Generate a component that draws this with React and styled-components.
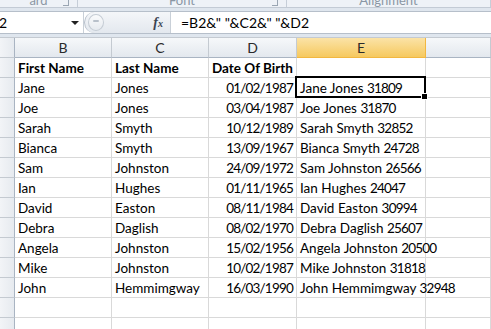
import React from 'react';
import styled, { createGlobalStyle } from 'styled-components';

const GlobalStyle = createGlobalStyle`
    html, body {
        margin: 0;
        padding: 0;
        background: #fff;
        overflow: hidden;
    }
    body {
        font-family: Lato, "Open Sans", sans-serif;
    }
`;

const Page = styled.div`
    width: 491px;
    height: 329px;
    overflow: hidden;
    background: #dfe6ee;
`;

const Ribbon = styled.div`
    display: flex;
    height: 7px;
    background: #eef2f7;
    border-bottom: 1px solid #c3cbd5;
    overflow: hidden;
`;

const RibbonGroup = styled.div`
    position: relative;
    width: ${p => p.$width ? p.$width + 'px' : 'auto'};
    flex: ${p => p.$width ? 'none' : '1'};
    border-right: 1px solid #c6ced8;
    display: flex;
    justify-content: center;
    align-items: flex-end;
    font-size: 13px;
    line-height: 7px;
    color: #8a96a4;
`;

const RibbonLabel = styled.span`
    margin-bottom: 3px;
`;

const Launcher = styled.span`
    position: absolute;
    right: 8px;
    bottom: 1px;
    width: 5px;
    height: 5px;
    border-right: 1px solid #9aa6b3;
    border-bottom: 1px solid #9aa6b3;
`;

const FormulaBar = styled.div`
    display: flex;
    height: 21px;
    margin-top: 3px;
    border-top: 1px solid #b6bfca;
    border-bottom: 1px solid #b6bfca;
    background: #fff;
`;

const NameBox = styled.div`
    width: 84px;
    display: flex;
    align-items: center;
    justify-content: space-between;
    padding-right: 4px;
    box-sizing: border-box;
    font-size: 14px;
    color: #000;
    border-right: 1px solid #c9d0d8;
`;

const NameText = styled.span`
    margin-left: -1px;
`;

const DropArrow = styled.span`
    width: 0;
    height: 0;
    border-left: 4px solid transparent;
    border-right: 4px solid transparent;
    border-top: 4px solid #222;
`;

const Pill = styled.div`
    width: 86px;
    display: flex;
    align-items: center;
    justify-content: space-between;
    padding: 0 7px 0 3px;
    box-sizing: border-box;
    background: linear-gradient(#f4f6f9, #e3e8ee);
    border-left: 1px solid #b6bfca;
    border-radius: 11px 0 0 11px;
`;

const GripButton = styled.span`
    width: 14px;
    height: 15px;
    border-radius: 50%;
    border: 1px solid #c5ccd4;
    background: linear-gradient(#fafbfc, #e6eaef);
    display: flex;
    align-items: center;
    justify-content: center;
    &::after {
        content: '';
        width: 6px;
        height: 2px;
        border-radius: 1px;
        background: #b8c0ca;
        margin-top: -3px;
    }
`;

const Fx = styled.span`
    font-family: "Liberation Serif", serif;
    font-style: italic;
    font-weight: bold;
    font-size: 14px;
    color: #3a4452;
    & small {
        font-size: 10px;
    }
`;

const FormulaInput = styled.div`
    flex: 1;
    display: flex;
    align-items: center;
    padding-left: 10px;
    font-size: 14px;
    color: #000;
    border-left: 1px solid #c9d0d8;
    white-space: pre;
`;

const Sheet = styled.div`
    display: grid;
    grid-template-columns: 15px 97px 97px 88px 129px 1fr;
    grid-auto-rows: 20px;
    margin-top: 3px;
    background: #fff;
    border-top: 1px solid #c4cad1;
`;

const ColHead = styled.div`
    display: flex;
    align-items: center;
    justify-content: center;
    font-size: 14px;
    color: #2a2a2a;
    background: ${p => p.$active
        ? 'linear-gradient(#fbe3a7, #f6c95f)'
        : 'linear-gradient(#f6f8fa, #e3e8ee)'};
    border-right: 1px solid ${p => p.$active ? '#f2b740' : '#c4cad1'};
    border-bottom: 1px solid ${p => p.$active ? '#f2b740' : '#a9b4c2'};
    box-sizing: border-box;
`;

const RowHead = styled.div`
    background: linear-gradient(90deg, #f2f4f7, #e6eaef);
    border-right: 1px solid #a9b4c2;
    border-bottom: 1px solid #c4cad1;
    box-sizing: border-box;
`;

const Cell = styled.div`
    position: relative;
    display: flex;
    align-items: center;
    justify-content: ${p => p.$right ? 'flex-end' : 'flex-start'};
    padding: 0 3px;
    box-sizing: border-box;
    font-size: 13.5px;
    font-weight: ${p => p.$bold ? 'bold' : 'normal'};
    letter-spacing: ${p => p.$right ? '-0.8px' : '0'};
    color: #000;
    white-space: pre;
    border-right: 1px solid #d9d9d9;
    border-bottom: 1px solid #d9d9d9;
    z-index: ${p => p.$selected ? 2 : 'auto'};
`;

const Serial = styled.span`
    letter-spacing: -0.8px;
`;

const Selection = styled.span`
    position: absolute;
    left: -2px;
    top: -2px;
    right: -1px;
    bottom: -1px;
    border: 2px solid #000;
    pointer-events: none;
    &::after {
        content: '';
        position: absolute;
        right: -4px;
        bottom: -4px;
        width: 5px;
        height: 5px;
        background: #000;
        border: 1px solid #fff;
    }
`;

const people = [
    ['Jane', 'Jones', '01/02/1987', 31809],
    ['Joe', 'Jones', '03/04/1987', 31870],
    ['Sarah', 'Smyth', '10/12/1989', 32852],
    ['Bianca', 'Smyth', '13/09/1967', 24728],
    ['Sam', 'Johnston', '24/09/1972', 26566],
    ['Ian', 'Hughes', '01/11/1965', 24047],
    ['David', 'Easton', '08/11/1984', 30994],
    ['Debra', 'Daglish', '08/02/1970', 25607],
    ['Angela', 'Johnston', '15/02/1956', 20500],
    ['Mike', 'Johnston', '10/02/1987', 31818],
    ['John', 'Hemmimgway', '16/03/1990', 32948],
];

const columns = ['B', 'C', 'D', 'E', ''];

function App() {
    return (
        <Page>
            <GlobalStyle />
            <Ribbon>
                <RibbonGroup $width={77}><RibbonLabel>ard</RibbonLabel><Launcher /></RibbonGroup>
                <RibbonGroup $width={208}><RibbonLabel>Font</RibbonLabel><Launcher /></RibbonGroup>
                <RibbonGroup><RibbonLabel>Alignment</RibbonLabel></RibbonGroup>
            </Ribbon>
            <FormulaBar>
                <NameBox>
                    <NameText>2</NameText>
                    <DropArrow />
                </NameBox>
                <Pill>
                    <GripButton />
                    <Fx>f<small>x</small></Fx>
                </Pill>
                <FormulaInput>{'=B2&" "&C2&" "&D2'}</FormulaInput>
            </FormulaBar>
            <Sheet>
                <RowHead />
                {columns.map((c, i) => (
                    <ColHead key={i} $active={c === 'E'}>{c}</ColHead>
                ))}

                <RowHead />
                <Cell $bold>First Name</Cell>
                <Cell $bold>Last Name</Cell>
                <Cell $bold>Date Of Birth</Cell>
                <Cell />
                <Cell />

                {people.map(([first, last, dob, serial], i) => (
                    <React.Fragment key={first}>
                        <RowHead />
                        <Cell>{first}</Cell>
                        <Cell>{last}</Cell>
                        <Cell $right>{dob}</Cell>
                        <Cell $selected={i === 0}>
                            {first + ' ' + last + ' '}<Serial>{serial}</Serial>
                            {i === 0 && <Selection />}
                        </Cell>
                        <Cell />
                    </React.Fragment>
                ))}

                {[0, 1].map(r => (
                    <React.Fragment key={'e' + r}>
                        <RowHead />
                        <Cell />
                        <Cell />
                        <Cell />
                        <Cell />
                        <Cell />
                    </React.Fragment>
                ))}
            </Sheet>
        </Page>
    );
}

export default App;
